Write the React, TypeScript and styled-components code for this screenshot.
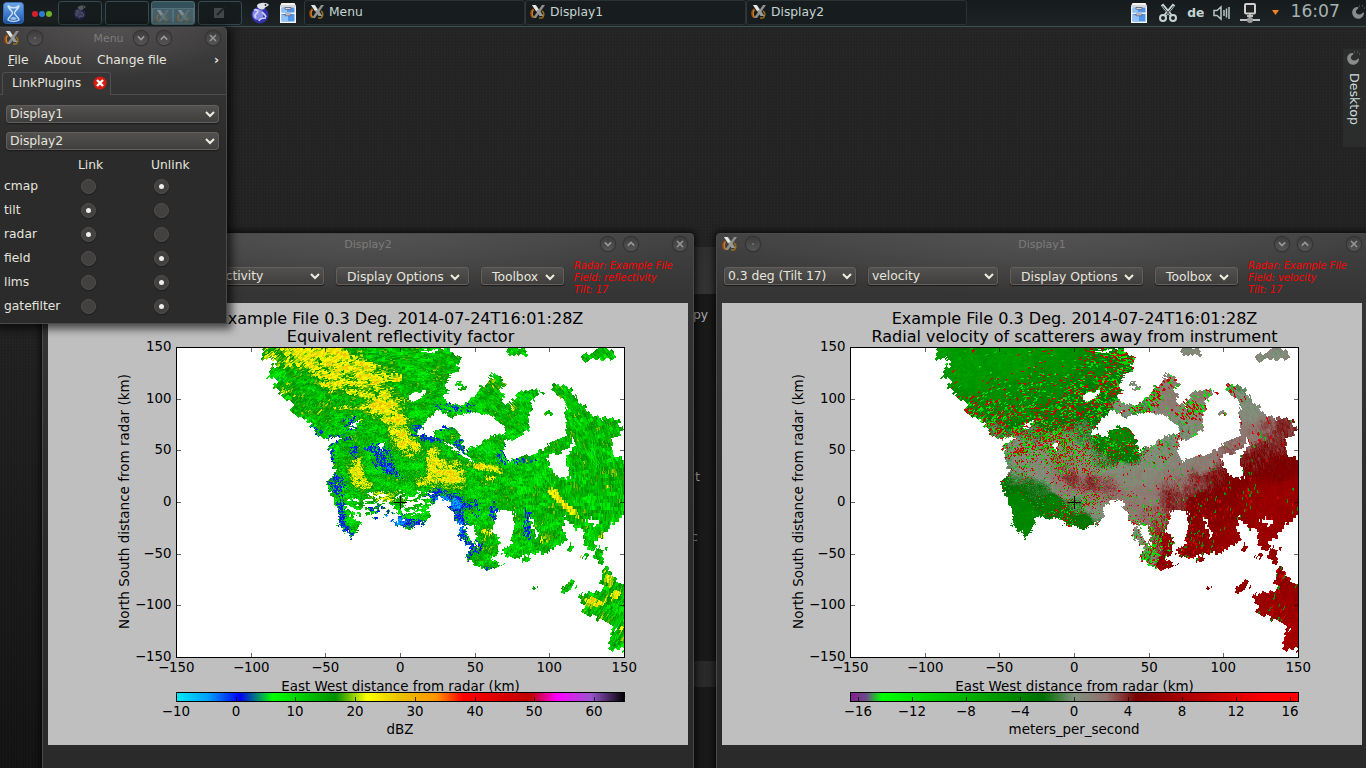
import React, { useMemo } from "react";
import styled, { createGlobalStyle, css } from "styled-components";

const Global = createGlobalStyle`
  html, body { margin: 0; height: 100%; overflow: hidden; background: #222; }
  *, *::before, *::after { box-sizing: border-box; }
  body { font: 12.3px "DejaVu Sans", sans-serif; color: #e4e4de; }
`;

/* ---------- radar data model ---------- */

type Pt = [number, number];
type Bump = [number, number, number, number, number, number];

const W = 448;
const H = 310;
const CX = 224;
const CY = 155;

const pts = (s: string): Pt[] => s.split(" ").map((p) => p.split(",").map(Number) as Pt);

const ECHO: Pt[][] = [
  pts(
    "92,-4 88,3 86,9 95,9 100,15 95,22 92,30 101,32 96,39 107,45 110,51 118,55 116,64 130,72 138,81 148,91 156,89 165,90 163,93 155,96 154,105 157,115 159,125 151,134 153,142 159,155 162,162 162,174 169,184 177,191 184,178 187,168 199,170 212,173 217,180 229,178 234,182 246,176 254,169 252,159 264,152 274,154 272,159 279,169 281,179 287,179 282,189 289,195 294,200 291,210 302,220 316,223 327,217 317,212 323,202 324,192 316,182 319,165 329,160 338,163 339,179 337,195 326,200 327,207 342,210 352,205 362,206 379,200 393,192 384,179 391,170 396,179 406,182 411,199 416,201 429,185 432,177 452,166 452,124 447,112 437,107 437,92 445,89 446,72 436,70 419,69 412,62 399,49 392,40 376,35 376,42 387,52 392,59 388,67 391,79 386,89 369,99 356,107 344,109 334,114 326,105 331,92 346,88 352,84 353,69 356,55 367,44 356,40 341,45 334,59 327,49 324,44 329,29 319,25 307,37 297,50 286,57 266,52 270,44 274,30 279,25 284,12 276,3 269,-4"
  ),
  pts("330,4 338,-3 351,2 352,9 340,7"),
  pts("403,9 416,2 426,-1 441,7 436,12 423,11 410,14"),
  pts("280,31 286,33 290,43 284,41"),
  pts("365,66 373,64 377,67 370,69"),
  pts("417,202 430,199 426,216 421,215"),
  pts("391,202 395,195 397,197 393,203"),
  pts("405,211 410,203 411,206 408,211"),
  pts("384,244 393,233 402,235 396,240 386,247"),
  pts("428,217 433,220 436,229 452,239 452,301 435,302 430,295 438,277 431,275 421,274 416,267 406,265 404,247 420,242 427,242 425,234"),
  pts("347,212 351,208 354,212 348,215"),
  pts("356,241 361,238 361,240 357,242"),
];

const GAPS: Pt[][] = [
  pts("243,82 260,64 270,64 273,70 283,67 300,64 323,72 328,84 313,89 306,95 295,99 290,104 286,92 280,79 261,79 258,90 243,87"),
  pts("373,107 386,105 397,91 399,99 391,109 389,115 396,131 386,129 375,121"),
  pts("289,176 300,176 301,198 293,193"),
  pts("233,47 248,42 246,50 236,54"),
  pts("240,2 268,1 256,6"),
  pts("173,76 182,73 180,77 175,80"),
  pts("203,95 208,98 207,103 204,103"),
  pts("410,170 425,172 420,178 411,175"),
  pts("353,167 356,169 362,186 359,190"),
];

const RIFT = pts("266,92 290,106 302,114 296,113 272,99");

const REFLECT: Bump[] = [
  [122, 6, 42, 11, 0, 8], [136, 16, 10, 3, 0, 6], [158, 18, 32, 18, 0.1, 8], [190, 26, 22, 11, 0, 7],
  [176, 38, 28, 11, 0, 6], [207, 50, 18, 8, 0, 8], [208, 64, 21, 9, 0.3, 9], [222, 82, 10, 16, -0.4, 9],
  [236, 100, 12, 9, 0.3, 9], [220, 30, 6, 6, 0, 7], [256, 110, 6, 12, 0.3, 9], [160, 60, 26, 6, 0, 4],
  [271, 126, 17, 14, 0.3, 11], [248, 132, 8, 5, -0.5, 8], [311, 120, 19, 3.5, 0.2, 11], [316, 131, 9, 3, 0.5, 6],
  [378, 146, 8, 4, 0.9, 9], [392, 160, 16, 3.2, 0.72, 11], [371, 189, 9, 5, -0.5, 7], [180, 125, 7, 13, -0.2, 9],
  [187, 137, 9, 6, 0.3, 8], [203, 149, 12, 5, 0.1, 10], [416, 254, 15, 4, 0, 10], [433, 232, 4, 8, -0.4, 9],
  [440, 247, 9, 3, -0.5, 8], [445, 285, 3, 9, 0, 7], [428, 267, 8, 3, -0.5, 6], [311, 185, 6, 8, 0, 7],
  [430, 132, 14, 12, 0, 3.5], [338, 57, 5, 6, 0, 6], [427, 189, 4, 4, -0.6, 8], [316, 34, 4, 5, 0, 5], [112, 40, 10, 6, 0, 5],
  [262, 25, 8, 5, 0, 4], [330, 144, 10, 5, 0, 4],
];

/* x, y, rx, ry, rotation, coverage of weak echo */
const WEAK: Bump[] = [
  [206, 110, 8, 14, -0.5, 0.9], [218, 124, 9, 3, 0.6, 0.8], [178, 105, 4, 6, 0, 0.9], [160, 136, 9, 9, 0, 0.75],
  [165, 168, 4, 17, 0, 1], [172, 184, 7, 4, 0.7, 0.9], [175, 76, 7, 7, 0, 0.7], [162, 91, 10, 4, 0, 0.7],
  [155, 104, 3, 14, 0, 0.7], [140, 84, 10, 4, 0.6, 0.5], [195, 102, 6, 4, 0, 0.5], [245, 80, 9, 5, 0, 0.8],
  [253, 90, 14, 3, 0.2, 0.8], [286, 98, 6, 9, -0.2, 0.8], [268, 79, 10, 3, 0, 0.7], [326, 107, 5, 10, -0.2, 0.6],
  [284, 58, 22, 6, 0, 0.25], [305, 70, 14, 5, 0.3, 0.25], [270, 151, 18, 7, 0.3, 1], [281, 168, 7, 16, 0, 0.95],
  [286, 190, 6, 16, 0, 0.95], [297, 199, 8, 5, 0, 0.9], [291, 208, 4, 6, 0, 0.8], [319, 166, 5, 9, 0, 0.7],
  [233, 175, 18, 4, 0.1, 0.9], [213, 172, 14, 6, 0, 1.6], [352, 176, 4, 14, 0, 0.5], [344, 112, 16, 4, 0, 0.35],
  [205, 160, 12, 4, 0, 0.7], [316, 221, 10, 2, 0, 0.5], [266, 152, 6, 3, 0, 1.1], [300, 160, 6, 8, 0, 0.3],
];

/* x, y, metres per second, speckle density */
const VELOCITY: number[][] = [
  [90, 5, -6, 0.01], [120, 30, -6, 0.02], [160, 15, -6, 0], [210, 10, -5.5, 0.02], [200, 40, -4.5, 0.12],
  [110, 50, -5, 0.06], [150, 45, -5, 0.1], [130, 65, -4, 0.5], [150, 68, -4.5, 0.45], [145, 78, -1, 0.6], [175, 65, -4.5, 0.3],
  [200, 72, -3.5, 0.3], [180, 82, -1, 0.6], [222, 62, -3.5, 0.45], [250, 22, -4, 0.25], [262, 40, -3.5, 0.55],
  [276, 12, -3.5, 0.5], [245, 60, -2.5, 0.5], [232, 85, -1, 0.2], [208, 95, 0.5, 0.7], [215, 105, 1, 0.7], [170, 100, 0.3, 0.5],
  [175, 112, 0.3, 0.3], [160, 120, -0.2, 0.08], [190, 122, 0.6, 0.08], [155, 135, -2, 0.02], [185, 142, -2, 0.02],
  [165, 155, -4, 0], [178, 172, -4.5, 0], [205, 153, -3.5, 0.05], [212, 142, 1.6, 0.14], [228, 157, -1, 0.35],
  [215, 168, -3, 0.35], [235, 174, -3, 0.02], [246, 163, 0.3, 0.02], [213, 120, 2.8, 0.3], [222, 132, 3.6, 0.06], [240, 136, 3.6, 0.04],
  [258, 140, 3, 0.04], [232, 118, 1, 0.35], [240, 151, 1.8, 0.45], [250, 112, -1, 0.3], [260, 98, -4, 0.3],
  [272, 92, -4.5, 0.1], [265, 83, -4.5, 0.05], [278, 104, -3, 0.2], [275, 125, 0.6, 0.03], [295, 130, 0.8, 0.01],
  [300, 150, 1.6, 0.02], [305, 110, 0.3, 0.12], [325, 95, 0, 0.15], [330, 120, 1, 0.03], [355, 115, 1.4, 0.02],
  [325, 137, 2.6, 0.04], [345, 133, 3.4, 0.08], [320, 150, 3.8, 0.02], [365, 130, 4.4, 0.08], [350, 155, 5.2, 0.08], [360, 175, 6, 0.06],
  [375, 150, 5.5, 0.12], [400, 150, 6.5, 0.1], [385, 135, 5.2, 0.02], [420, 150, 7, 0.01], [440, 145, 7, 0.01],
  [430, 120, 5, 0], [410, 105, 4.2, 0.01], [435, 80, 3.8, 0.02], [415, 78, 2.8, 0.06], [400, 88, 2, 0.1],
  [405, 65, 0.2, 0.01], [390, 45, -0.2, 0.02], [378, 37, -0.6, 0.35], [425, 6, 0.5, 0], [342, 4, 0.4, 0],
  [320, 55, 1.5, 0.04], [322, 32, 1.5, 0.25], [350, 45, 1.5, 0.2], [340, 65, 0.3, 0.55], [350, 75, 1.2, 0.12], [308, 44, 1.2, 0.45],
  [290, 57, -1, 0.55], [275, 58, 0.5, 0.1], [284, 35, 0, 0], [335, 80, -0.3, 0.1], [280, 165, 1.6, 0.1], [300, 165, 2.4, 0.15],
  [287, 188, 0, 0.15], [308, 180, 3, 0.5], [305, 200, 3, 0.55], [319, 192, 7, 0.15], [297, 210, -1, 0.6],
  [315, 217, 6.5, 0.05], [340, 205, 6.2, 0.2], [375, 190, 6.8, 0.02], [415, 190, 7, 0], [425, 208, 6.5, 0],
  [390, 240, 6.5, 0], [435, 225, 6, 0.2], [415, 255, 7, 0], [415, 268, 7, 0.2], [440, 250, 7, 0], [443, 290, 7.8, 0],
];

const REF_STOPS: [number, string][] = [
  [0, "#00eaf2"], [0.07, "#00a0fa"], [0.142, "#0000f4"], [0.215, "#00ff00"], [0.355, "#009000"], [0.425, "#ffff00"],
  [0.5, "#e8c000"], [0.58, "#ff9400"], [0.64, "#ff0000"], [0.79, "#c00000"], [0.85, "#ff00ff"], [0.925, "#9955cc"], [1, "#000000"],
];
const VEL_STOPS: [number, string][] = [
  [0, "#80208c"], [0.035, "#6a4a88"], [0.07, "#00ff00"], [0.43, "#006e00"], [0.5, "#80907c"], [0.57, "#90706c"],
  [0.64, "#780000"], [0.93, "#ff0000"], [1, "#ff0000"],
];

const hash = (a: number, b: number, c = 0) => {
  let h = Math.imul(a | 0, 374761393) ^ Math.imul(b | 0, 668265263) ^ Math.imul(c | 0, 2147483647);
  h = Math.imul(h ^ (h >>> 13), 1274126177);
  h = Math.imul(h ^ (h >>> 15), 2246822519);
  return ((h ^ (h >>> 16)) >>> 0) / 4294967296;
};

const smooth = (x: number, y: number, seed: number) => {
  const xi = Math.floor(x);
  const yi = Math.floor(y);
  const u = (x - xi) ** 2 * (3 - 2 * (x - xi));
  const v = (y - yi) ** 2 * (3 - 2 * (y - yi));
  const top = hash(xi, yi, seed) * (1 - u) + hash(xi + 1, yi, seed) * u;
  const low = hash(xi, yi + 1, seed) * (1 - u) + hash(xi + 1, yi + 1, seed) * u;
  return top * (1 - v) + low * v - 0.5;
};

const inside = (x: number, y: number, poly: Pt[]) => {
  let hit = false;
  for (let i = 0, j = poly.length - 1; i < poly.length; j = i++) {
    const [ax, ay] = poly[i];
    const [bx, by] = poly[j];
    if (ay > y !== by > y && x < ((bx - ax) * (y - ay)) / (by - ay) + ax) hit = !hit;
  }
  return hit;
};

const ramp = (stops: [number, string][], t: number) => {
  const k = Math.max(0, Math.min(1, t));
  let i = 1;
  while (i < stops.length - 1 && stops[i][0] < k) i++;
  const [p0, c0] = stops[i - 1];
  const [p1, c1] = stops[i];
  const f = Math.max(0, (k - p0) / (p1 - p0));
  const ch = (c: string, n: number) => parseInt(c.slice(1 + n * 2, 3 + n * 2), 16);
  const mix = [0, 1, 2].map((n) => Math.round(ch(c0, n) + (ch(c1, n) - ch(c0, n)) * f));
  return `rgb(${mix.join(",")})`;
};

type Kind = "ref" | "vel";

const bump = (x: number, y: number, list: Bump[]) => {
  let v = 0;
  for (const [bx, by, rx, ry, rot, amp] of list) {
    const dx = x - bx;
    const dy = y - by;
    if (Math.abs(dx) > 80 || Math.abs(dy) > 80) continue;
    const c = Math.cos(rot);
    const s = Math.sin(rot);
    const q = ((dx * c + dy * s) / rx) ** 2 + ((dy * c - dx * s) / ry) ** 2;
    if (q < 5) v += amp * Math.exp(-q * q * 0.6);
  }
  return v;
};

const refLevel = (x: number, y: number, n: number, m: number) => {
  const grain = smooth(x / 8, y / 4, 3) * 8 + smooth(x / 3, y / 2, 5) * 5;
  const weak = bump(x, y, WEAK);
  if (weak > 0.1 && m + smooth(x / 4, y / 3, 31) * 0.7 < weak * 0.8) {
    return ((weak > 1.2 ? -4 : 1) + (n - 0.5) * 5 + 10) / 75;
  }
  const v = Math.min(12.3 + bump(x, y, REFLECT), 22.7) + grain + (n - 0.5) * 7;
  return (Math.max(v, 4) + 10) / 75;
};

const velLevel = (x: number, y: number, n: number, m: number) => {
  let sum = 0;
  let val = 0;
  let speck = 0;
  for (const [px, py, v, s] of VELOCITY) {
    const w = 1 / ((x - px) ** 2 + (y - py) ** 2 + 12) ** 2;
    sum += w;
    val += w * v;
    speck += w * s;
  }
  let v = val / sum + (n - 0.5) * 1.1 + smooth(x / 5, y / 5, 9) * 0.8;
  const density = (speck / sum) * (1.05 + smooth(x / 5, y / 3, 12) * 1.9);
  if (m < density) {
    if (x > 335 && y > 110) v = n > 0.45 ? 11 : -6;
    else v = n > 0.5 ? 7 + n * 5 : -8 - n * 12;
  }
  return (v + 16.6) / 33.2;
};

const scan = (kind: Kind): [string, string][] => {
  const stops = kind === "ref" ? REF_STOPS : VEL_STOPS;
  const gates = new Map<number, number>();
  const level = (px: number, py: number) => {
    const dx = px + 0.5 - CX;
    const dy = py + 0.5 - CY;
    const r = Math.floor(Math.hypot(dx, dy) / 1.1);
    const a = Math.floor(((Math.atan2(dy, dx) + Math.PI) * 180) / Math.PI);
    const key = r * 400 + a;
    const known = gates.get(key);
    if (known !== undefined) return known;
    const th = ((a + 0.5) * Math.PI) / 180 - Math.PI;
    const gx = CX + Math.cos(th) * (r + 0.5) * 1.1;
    const gy = CY + Math.sin(th) * (r + 0.5) * 1.1;
    const jx = gx + smooth(gx / 4, gy / 3, 1) * 6 + (hash(a, r, 7) - 0.5) * 1.6;
    const jy = gy + smooth(gx / 4, gy / 3, 2) * 5 + (hash(a, r, 8) - 0.5) * 1.6;
    let on = ECHO.some((p) => inside(jx, jy, p)) && !GAPS.some((p) => inside(jx, jy, p));
    if (on && kind === "ref") {
      const q = ((gx - 222) / 52) ** 2 + ((gy - 160) / 18) ** 2;
      const hollow = smooth(gx / 4, gy / 2.5, 21) + smooth(gx / 2, gy / 1.5, 22) * 0.7;
      const lobe = gy > 165 && gx > 222 ? 0.3 : gy < 154 && gx < 222 ? 0.1 : 0;
      const bare = gx < 222 && gy > 161 ? 0.22 : 0;
      if (q < 1.1 && hollow > -0.04 + q * 0.25 + lobe - bare) on = false;
      if (inside(jx, jy, RIFT)) on = false;
    }
    let out = -1;
    if (on) {
      const t = (kind === "ref" ? refLevel : velLevel)(gx, gy, hash(a, r, 4), hash(a, r, 6));
      out = Math.round(Math.max(0, Math.min(1, t)) * 90);
    }
    gates.set(key, out);
    return out;
  };
  const runs: string[][] = Array.from({ length: 91 }, () => []);
  for (let y = 0; y < H; y++) {
    let start = 0;
    let cur = level(0, y);
    for (let x = 1; x <= W; x++) {
      const next = x < W ? level(x, y) : -2;
      if (next !== cur) {
        if (cur >= 0) runs[cur].push(`M${start} ${y}h${x - start}v1h${start - x}z`);
        start = x;
        cur = next;
      }
    }
  }
  return runs.map((r, i) => [ramp(stops, i / 90), r.join("")] as [string, string]).filter(([, d]) => d);
};

/* ---------- chart ---------- */

const ChartSvg = styled.svg`
  display: block;
  flex: none;
  background: #bfbfbf;
  font: 13.42px "DejaVu Sans", sans-serif;
  fill: #000;
`;

interface ChartProps {
  kind: Kind;
  title: string;
  unit: string;
  ticks: { at: number; label: string }[];
}

const minus = (n: number) => (n < 0 ? `\u2212${-n}` : `${n}`);
const AXIS = [-150, -100, -50, 0, 50, 100, 150];

const Chart = ({ kind, title, unit, ticks }: ChartProps) => {
  const layers = useMemo(() => scan(kind), [kind]);
  const stops = kind === "ref" ? REF_STOPS : VEL_STOPS;
  return (
    <ChartSvg width="640" height="442" viewBox="0 0 640 442">
      <defs>
        <linearGradient id={`bar-${kind}`}>
          {stops.map(([o, c]) => (
            <stop key={o} offset={o} stopColor={c} />
          ))}
        </linearGradient>
      </defs>
      <text x="352.5" y="21" fontSize="16.04" textAnchor="middle">Example File 0.3 Deg. 2014-07-24T16:01:28Z</text>
      <text x="352.5" y="39" fontSize="16.04" textAnchor="middle">{title}</text>
      <rect x="128.5" y="44.5" width="448" height="310" fill="#fff" />
      <g transform="translate(128 45)" shapeRendering="crispEdges">
        {layers.map(([c, d], i) => (
          <path key={i} d={d} fill={c} />
        ))}
      </g>
      <rect x="128.5" y="44.5" width="448" height="310" fill="none" stroke="#000" />
      <path d="M346 199.5h13M352.5 193v13" stroke="#000" />
      {AXIS.map((v, i) => {
        const x = Math.round(128 + i * 74.67) + 0.5;
        const y = Math.round(354 - i * 51.67) + 0.5;
        return (
          <g key={v}>
            <path d={`M${x} 354v-4M${x} 45v4M129 ${y}h4M576 ${y}h-4`} stroke="#000" strokeOpacity=".6" />
            <text x={x - 0.3} y="368.5" textAnchor="middle" fontSize="13.33">{minus(v)}</text>
            <text x="123.5" y={y + 3.5} textAnchor="end" fontSize="13.33">{minus(v)}</text>
          </g>
        );
      })}
      <text x="352.5" y="387.5" textAnchor="middle">East West distance from radar (km)</text>
      <text transform="translate(81 198.5) rotate(-90)" textAnchor="middle" fontSize="13.5">North South distance from radar (km)</text>
      <rect x="128.5" y="389.5" width="448" height="9" fill={`url(#bar-${kind})`} stroke="#000" />
      {ticks.map((t) => (
        <g key={t.label}>
          <path d={`M${t.at + 0.5} 398v-4`} stroke="#000" strokeOpacity=".7" />
          <text x={t.at} y="412.5" textAnchor="middle">{t.label}</text>
        </g>
      ))}
      <text x="352" y="431" textAnchor="middle">{unit}</text>
    </ChartSvg>
  );
};

/* ---------- icons ---------- */

const XIcon = ({ size = 16 }: { size?: number }) => (
  <svg width={size} height={size} viewBox="0 0 16 16">
    <path d="M3.5 5C.5 7.500.5 11 3 13.500" fill="none" stroke="#a4500f" strokeWidth="2" />
    <path d="M3.5 6C1.800 8 1.800 11 4 13.500" fill="none" stroke="#f0a030" strokeWidth="1" />
    <path d="M12 7c2.500 1.500 2.500 5 0 7H9" fill="none" stroke="#94701c" strokeWidth="1.500" />
    <path d="M12 1h3L6 14H3z" fill="#8f8f8c" />
    <path d="M2 1h4l7.500 11H9.500z" fill="#9a9a98" />
    <path d="M2 1h3.500l3 4.500L6 7z" fill="#e6e6e4" />
  </svg>
);

const Drawer = () => (
  <svg width="18" height="22" viewBox="0 0 18 22">
    <path d="M2.500 1h13l1.500 3v17H1V4z" fill="#f4f4f2" />
    <path d="M1 4h16" stroke="#bbb" />
    <path d="M2.500 5.500h13v5h-13zM2.500 12h13v7.500h-13z" fill="#4f96ea" />
    <path d="M3 6h5v4H3zM3 13h6v6H3z" fill="#8fc2f8" />
    <path d="M6 5.500h6v1.700H6zM6 12h6v1.700H6z" fill="#fff" stroke="#446" strokeWidth=".7" />
  </svg>
);

const Globe = ({ size = 22 }: { size?: number }) => (
  <svg width={size} height={size} viewBox="0 0 22 22">
    <circle cx="10" cy="13" r="8.500" fill="#3331a8" />
    <circle cx="8" cy="12.500" r="5.500" fill="#8688e6" />
    <path d="M4 8c3-1 5 1 3 3s-3 2-1 5M9 19c1-3 4-3 7-3M12 10c2 2 3 2 4 5" stroke="#ced2fb" fill="none" strokeWidth="1.700" />
    <path d="M7 3c3-3 10-3 12 0l-2 1.500c-2 .5-2 2-4 3-3 0-6-1-6-4.500z" fill="#dfe0e8" />
    <circle cx="15.500" cy="3" r=".9" fill="#223" />
  </svg>
);

const Launcher = () => (
  <svg width="21" height="22" viewBox="0 0 21 22">
    <defs>
      <linearGradient id="lg" x2="0" y2="1">
        <stop stopColor="#6fa6e4" />
        <stop offset="1" stopColor="#1858b4" />
      </linearGradient>
    </defs>
    <rect x=".5" y=".5" width="20" height="21" rx="3" fill="url(#lg)" stroke="#3470bd" />
    <path d="M5 3.500c2 3 9 3 11 0M5 3.500c0 4 4 4 4.500 7.500C9 14 6 14 5 18c3 2 8 2 11 0-1-4-4-4-4.500-7 .5-3.500 4.500-3.500 4.500-7.500" fill="none" stroke="#cfe3f8" strokeWidth="1.500" />
    <path d="M7 17c2-3 5-3 7 0-2 1.500-5 1.500-7 0z" fill="#9cc4f0" />
  </svg>
);

const Cashew = ({ size = 15 }: { size?: number }) => (
  <svg width={size} height={size} viewBox="0 0 15 15">
    <path d="M6 2C1 2.500-.5 9 3.500 12.500c4 3 9.500.5 9.500-5-1.500-.5-2 2-4.500 2C6 9.500 4.500 8 5 6c.5-1.600 1.800-2 2.500-3C7.500 2 7 2 6 2z" fill="#8b8b8b" />
    <path d="M8 1h1M11 1h1M13 3h1" stroke="#777" />
  </svg>
);

const Chevron = ({ up = false, size = 10, color = "#ededdf", weight = 2 }) => (
  <svg width={size} height={size} viewBox="0 0 10 10">
    <path d={up ? "M1 7l4-4 4 4" : "M1 3l4 4 4-4"} fill="none" stroke={color} strokeWidth={weight} />
  </svg>
);

/* ---------- desktop ---------- */

const Desktop = styled.main`
  position: relative;
  width: 1366px;
  height: 768px;
  overflow: hidden;
  background: repeating-linear-gradient(90deg, #ffffff03 0 1px, transparent 1px 3px),
    repeating-linear-gradient(0deg, #0000000c 0 1px, transparent 1px 3px),
    linear-gradient(#252525, #222 40%, #131313);
`;

const Panel = styled.header`
  position: relative;
  display: flex;
  align-items: center;
  height: 27px;
  background: linear-gradient(#151b1c, #1e2425);
  border-bottom: 1px solid #3b5055;
  padding: 0 0 1px 3px;
  color: #c5d4d3;
`;

const Dots = styled.div`
  display: flex;
  gap: 1px;
  margin: 3px 6px 0 8px;
`;

const Dot = styled.i<{ $c: string }>`
  width: 6px;
  height: 6px;
  border-radius: 50%;
  background: ${(p) => p.$c};
`;

const Pager = styled.div<{ $on?: boolean }>`
  display: flex;
  flex: none;
  align-items: flex-end;
  justify-content: center;
  width: 44px;
  height: 24px;
  margin-right: 2.5px;
  border: 1px solid ${(p) => (p.$on ? "#4d6b74" : "#344a50")};
  border-radius: 3px;
  background: ${(p) => (p.$on ? "#34505a" : "#161c1d")};
`;

const PagerWindow = styled.span`
  display: flex;
  justify-content: center;
  width: 21px;
  height: 16px;
  border: 1px solid #54727b;
  background: #466069;
  svg { opacity: 0.35; }
`;

const Faded = styled.span`
  display: flex;
  align-self: center;
  opacity: 0.3;
`;

const Launchers = styled.div`
  display: flex;
  align-items: center;
  gap: 7px;
  margin: 0 7px 0 6px;
`;

const Task = styled.div`
  display: flex;
  align-items: center;
  gap: 4px;
  width: 221px;
  height: 25px;
  padding: 0 0 1px 4px;
  border: 1px solid #293133;
  border-left-color: #30393b;
  border-radius: 3px;
  background: #171d1e;
`;

const Tray = styled.div`
  display: flex;
  align-items: center;
  margin-left: auto;
  svg { flex: none; }
`;

const Lang = styled.b`
  margin: 0 9px 0 9px;
  font-size: 12.3px;
`;

const Clock = styled.span`
  margin: 0 11px 3px 11px;
  font-size: 17.2px;
  color: #a5b2b1;
`;

const SideTab = styled.aside`
  position: absolute;
  right: 0;
  top: 49px;
  display: flex;
  flex-direction: column;
  align-items: center;
  gap: 7px;
  width: 23px;
  height: 98px;
  padding: 2px 2px 0 0;
  background: #2b2c2c;
  color: #cbdcdb;
  span { writing-mode: vertical-rl; line-height: 20px; font-size: 12.6px; }
`;

const BackWindow = styled.div`
  position: absolute;
  left: 600px;
  top: 247px;
  width: 200px;
  height: 521px;
  background: linear-gradient(#2f2f2f, #333 47px, #191919 47px 414px, #2a2a2a 414px 440px, #191919 440px);
`;

const BackText = styled.span<{ $x: number; $y: number }>`
  position: absolute;
  left: ${(p) => p.$x}px;
  top: ${(p) => p.$y}px;
  color: #aaa;
`;

const frame = css`
  position: absolute;
  border: 1px solid #4b4a4a;
  border-radius: 4px 4px 0 0;
  box-shadow: 0 0 6px 2px #000000b0;
`;

const RadarWindow = styled.section<{ $x: number }>`
  ${frame}
  left: ${(p) => p.$x}px;
  top: 233px;
  width: 652px;
  height: 560px;
  padding: 0 5px;
  background: radial-gradient(ellipse 330px 60px at 50% 0, #545353, #54535300), linear-gradient(#444343, #353535 60px, #2a2a2a 300px);
`;

const TitleBar = styled.div<{ $inset?: boolean }>`
  display: flex;
  align-items: center;
  height: 20px;
  padding: ${(p) => (p.$inset ? "0 6px 0 4px" : "0 1px 0 1px")};
  margin-left: ${(p) => (p.$inset ? "0" : "-1px")};
`;

const Caption = styled.span<{ $shift: number }>`
  flex: 1;
  text-align: center;
  font-size: 11px;
  color: #7c7b7b;
  padding-left: ${(p) => p.$shift}px;
`;

const RoundButton = styled.i<{ $gap?: number }>`
  display: flex;
  flex: none;
  align-items: center;
  justify-content: center;
  width: 14px;
  height: 14px;
  margin-left: ${(p) => p.$gap ?? 9}px;
  border-radius: 50%;
  background: linear-gradient(#3e3d3d, #565555);
  box-shadow: 0 0 1px 1px #2f2f2f;
`;

const Toolbar = styled.div`
  display: flex;
  align-items: center;
  gap: 12px;
  height: 49px;
  padding: 0 2px 5px;
`;

const Field = styled.div<{ $w: number; $menu?: boolean }>`
  display: flex;
  align-items: center;
  justify-content: space-between;
  flex: none;
  width: ${(p) => p.$w}px;
  height: 18px;
  padding: ${(p) => (p.$menu ? "1px 8px 0 10px" : "0 3px 1px 3px")};
  border: 1px solid #62605e;
  border-radius: 3px;
  background: linear-gradient(#53514f, #413f3e);
  box-shadow: 0 1px 1px #1b1b1b;
  font-size: 12.4px;
  letter-spacing: -0.05px;
  line-height: 16px;
  white-space: nowrap;
`;

const Info = styled.div`
  margin: 4px 0 0 -2px;
  font: italic 9.85px/12px "DejaVu Sans", sans-serif;
  color: #f00;
  white-space: nowrap;
`;

const MenuWindow = styled.section`
  ${frame}
  left: -4px;
  top: 27px;
  width: 231px;
  height: 297px;
  padding-left: 3px;
  background: radial-gradient(ellipse 120px 50px at 50% 0, #525050, #52505000), linear-gradient(#413f3f, #343434 60px, #2b2b2b 120px);
  box-shadow: 2px 2px 8px 3px #000000a0;
`;

const MenuBar = styled.nav`
  display: flex;
  gap: 16px;
  height: 22px;
  padding: 5px 7px 0 8px;
  white-space: nowrap;
  span:last-child { margin-left: auto; font-weight: bold; }
`;

const TabRow = styled.div`
  display: flex;
  height: 23px;
  margin-top: 2px;
  padding-left: 2px;
  border-bottom: 1px solid #4f4e4e;
`;

const Tab = styled.div`
  display: flex;
  align-items: center;
  justify-content: space-between;
  width: 109px;
  height: 23px;
  padding: 0 3px 2px 9px;
  border: 1px solid #504f4f;
  border-bottom: 0;
  border-radius: 3px 3px 0 0;
  background: #363535;
  svg { flex: none; }
`;

const Selects = styled.div`
  display: grid;
  gap: 9px;
  padding: 10px 0 0 6px;
`;

const LinkGrid = styled.div`
  display: grid;
  grid-template-columns: 52px 73px 73px;
  grid-template-rows: 22px repeat(6, 24px);
  align-items: center;
  padding: 2px 0 0 4px;
`;

const RowName = styled.span`
  white-space: nowrap;
  line-height: 16px;
`;

const Heading = styled.span`
  justify-self: start;
  padding: 4px 0 0 22px;
`;

const Radio = styled.i`
  justify-self: center;
  display: flex;
  align-items: center;
  justify-content: center;
  width: 15px;
  height: 15px;
  margin-right: 9px;
  border: 1px solid #545251;
  border-radius: 50%;
  background: #42413f;
  box-shadow: 0 1px 1px #1c1c1c;
`;

const Pip = styled.i`
  width: 5px;
  height: 5px;
  border-radius: 50%;
  background: #eee;
`;

const Title = ({ name, inset = false }: { name: string; inset?: boolean }) => (
  <TitleBar $inset={inset}>
    <XIcon />
    <RoundButton $gap={8}>
      <svg width="2" height="2"><path d="M0 1h2" stroke="#888" /></svg>
    </RoundButton>
    <Caption $shift={inset ? 50 : 58}>{name}</Caption>
    <RoundButton><Chevron size={8} color="#999" /></RoundButton>
    <RoundButton><Chevron up size={8} color="#999" /></RoundButton>
    <RoundButton $gap={35}>
      <svg width="8" height="8"><path d="M1 1l6 6M7 1L1 7" stroke="#999" strokeWidth="1.5" /></svg>
    </RoundButton>
  </TitleBar>
);

const Radar = ({ x, name, field, ...chart }: { x: number; name: string; field: string } & ChartProps) => (
  <RadarWindow $x={x}>
    <Title name={name} />
    <Toolbar>
      <Field $w={132}>0.3 deg (Tilt 17)<Chevron /></Field>
      <Field $w={130}>{field}<Chevron /></Field>
      <Field $w={133} $menu>Display Options<Chevron /></Field>
      <Field $w={83} $menu>Toolbox<Chevron /></Field>
      <Info>Radar: Example File<br />Field: {field}<br />Tilt: 17</Info>
    </Toolbar>
    <Chart {...chart} />
  </RadarWindow>
);

const LINKS: [string, boolean][] = [
  ["cmap", false], ["tilt", true], ["radar", true], ["field", false], ["lims", false], ["gatefilter", false],
];

export default function App() {
  return (
    <Desktop>
      <Global />
      <Panel>
        <Launcher />
        <Dots><Dot $c="#d3202b" /><Dot $c="#2b7cd0" /><Dot $c="#6fb327" /></Dots>
        <Pager><Faded><Globe size={15} /></Faded></Pager>
        <Pager />
        <Pager $on>
          <PagerWindow><XIcon size={15} /></PagerWindow>
          <PagerWindow><XIcon size={15} /></PagerWindow>
        </Pager>
        <Pager>
          <Faded>
            <svg width="14" height="14"><path d="M1 2h10v10H1z" fill="#aaa" /><path d="M4 9l8-8" stroke="#333" strokeWidth="2" /></svg>
          </Faded>
        </Pager>
        <Launchers><Globe /><Drawer /></Launchers>
        {["Menu", "Display1", "Display2"].map((t) => (
          <Task key={t}><XIcon />{t}</Task>
        ))}
        <Tray>
          <Drawer />
          <svg width="20" height="20" viewBox="0 0 20 20" style={{ marginLeft: 10 }}>
            <path d="M4 1.500l9.500 11.500M16 1.500L6.500 13" stroke="#c7d4d4" strokeWidth="3.200" />
            <path d="M4.500 3l8 9.500M15.500 3l-8 9.500" stroke="#2a3132" strokeWidth="1" />
            <circle cx="5" cy="15" r="3" fill="none" stroke="#c7d4d4" strokeWidth="2" />
            <circle cx="15" cy="15" r="3" fill="none" stroke="#c7d4d4" strokeWidth="2" />
          </svg>
          <Lang>de</Lang>
          <svg width="17" height="16" viewBox="0 0 17 16" fill="none" stroke="#b5c3c3" strokeWidth="1.500">
            <path d="M1 5.500h3l4-3.500v12L4 10.500H1zM11 5v6M13.500 3.500v9M16 2v12" />
          </svg>
          <svg width="22" height="21" viewBox="0 0 22 21" style={{ marginLeft: 9 }}>
            <rect x="6" y="2" width="10" height="9.500" rx="1" fill="#222" stroke="#d0d0d0" strokeWidth="2" />
            <path d="M8 14h6M11 12v4M1 18h20" stroke="#c0c0c0" strokeWidth="2" />
            <circle cx="11" cy="18" r="3" fill="#999" />
          </svg>
          <svg width="7" height="5" style={{ marginLeft: 11 }}><path d="M0 0h7L3.500 5z" fill="#f58220" /></svg>
          <Clock>16:07</Clock>
          <Cashew />
        </Tray>
      </Panel>
      <SideTab><Cashew /><span>Desktop</span></SideTab>
      <BackWindow>
        <BackText $x={93} $y={61}>py</BackText>
        <BackText $x={95} $y={223}>t</BackText>
        <BackText $x={91} $y={283}>c</BackText>
      </BackWindow>
      <Radar
        x={42}
        name="Display2"
        field="reflectivity"
        kind="ref"
        title="Equivalent reflectivity factor"
        unit="dBZ"
        ticks={[-10, 0, 10, 20, 30, 40, 50, 60].map((v, i) => ({ at: Math.round(128 + i * 59.73), label: minus(v) }))}
      />
      <Radar
        x={716}
        name="Display1"
        field="velocity"
        kind="vel"
        title="Radial velocity of scatterers away from instrument"
        unit="meters_per_second"
        ticks={[-16, -12, -8, -4, 0, 4, 8, 12, 16].map((v, i) => ({ at: Math.round(136 + i * 54), label: minus(v) }))}
      />
      <MenuWindow>
        <Title name="Menu" inset />
        <MenuBar>
          <span><u>F</u>ile</span><span>About</span><span>Change file</span><span>›</span>
        </MenuBar>
        <TabRow>
          <Tab>
            LinkPlugins
            <svg width="14" height="14" viewBox="0 0 14 14">
              <circle cx="7" cy="7" r="6.5" fill="#d81a12" />
              <path d="M4 4l6 6M10 4l-6 6" stroke="#fff" strokeWidth="2.4" />
            </svg>
          </Tab>
        </TabRow>
        <Selects>
          <Field $w={213}>Display1<Chevron /></Field>
          <Field $w={213}>Display2<Chevron /></Field>
        </Selects>
        <LinkGrid>
          <span />
          <Heading>Link</Heading>
          <Heading>Unlink</Heading>
          {LINKS.map(([name, linked]) => (
            <React.Fragment key={name}>
              <RowName>{name}</RowName>
              <Radio>{linked && <Pip />}</Radio>
              <Radio>{!linked && <Pip />}</Radio>
            </React.Fragment>
          ))}
        </LinkGrid>
      </MenuWindow>
    </Desktop>
  );
}
